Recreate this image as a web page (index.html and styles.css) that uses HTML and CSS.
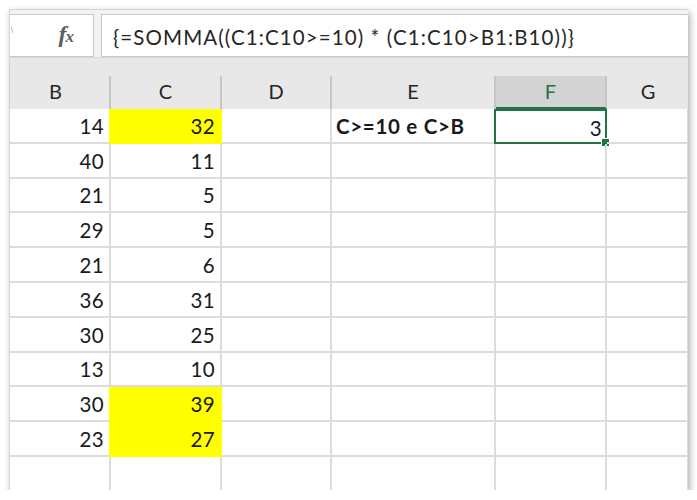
FILE: index.html
```html
<!DOCTYPE html>
<html>
<head>
<meta charset="utf-8">
<link rel="stylesheet" href="styles.css">
</head>
<body>
<div class="frame">
  <div class="fbar">
    <div class="namebox">
      <svg class="tick" width="4" height="8" viewBox="0 0 4 8"><path d="M1 1 L3 7" stroke="#c8c8c8" stroke-width="1.2" fill="none"/></svg>
      <span class="fx"><span class="f">f</span><span class="x">x</span></span>
    </div>
    <div class="formula">{=SOMMA((C1:C10&gt;=10) * (C1:C10&gt;B1:B10))}</div>
  </div>
  <div class="headzone">
    <div class="heads">
      <div class="h">B</div>
      <div class="h">C</div>
      <div class="h">D</div>
      <div class="h">E</div>
      <div class="h sel">F</div>
      <div class="h last">G</div>
    </div>
  </div>
  <div class="grid">
    <div class="c num">14</div><div class="c num y">32</div><div class="c"></div><div class="c lbl">C&gt;=10 e C&gt;B</div><div class="c num active">3<span class="handle"></span></div><div class="c"></div>
    <div class="c num">40</div><div class="c num">11</div><div class="c"></div><div class="c"></div><div class="c"></div><div class="c"></div>
    <div class="c num">21</div><div class="c num">5</div><div class="c"></div><div class="c"></div><div class="c"></div><div class="c"></div>
    <div class="c num">29</div><div class="c num">5</div><div class="c"></div><div class="c"></div><div class="c"></div><div class="c"></div>
    <div class="c num">21</div><div class="c num">6</div><div class="c"></div><div class="c"></div><div class="c"></div><div class="c"></div>
    <div class="c num">36</div><div class="c num">31</div><div class="c"></div><div class="c"></div><div class="c"></div><div class="c"></div>
    <div class="c num">30</div><div class="c num">25</div><div class="c"></div><div class="c"></div><div class="c"></div><div class="c"></div>
    <div class="c num">13</div><div class="c num">10</div><div class="c"></div><div class="c"></div><div class="c"></div><div class="c"></div>
    <div class="c num">30</div><div class="c num y">39</div><div class="c"></div><div class="c"></div><div class="c"></div><div class="c"></div>
    <div class="c num">23</div><div class="c num y">27</div><div class="c"></div><div class="c"></div><div class="c"></div><div class="c"></div>
    <div class="c"></div><div class="c"></div><div class="c"></div><div class="c"></div><div class="c"></div><div class="c"></div>
  </div>
</div>
</body>
</html>
```
FILE: styles.css
```css
html, body {
  margin: 0;
  padding: 0;
  background: #ffffff;
}
body {
  font-family: Lato, "Open Sans", sans-serif;
  color: #1a1a1a;
}
.frame {
  margin: 9px 0 0 9px;
  width: 679px;
  height: 481px;
  overflow: hidden;
  background: #ffffff;
  border-left: 1px solid #d4d4d4;
  border-top: 1px solid #d4d4d4;
  box-shadow: 2px 3px 7px rgba(0, 0, 0, 0.32);
  box-sizing: border-box;
}
.fbar {
  height: 47px;
  background: #f2f2f2;
  display: flex;
  gap: 7px;
  padding: 4px 0 0 0;
  box-sizing: border-box;
}
.namebox {
  width: 84px;
  background: #ffffff;
  border: 1px solid #c9c9c9;
  border-left: none;
  display: flex;
  align-items: center;
  justify-content: space-between;
  padding-right: 20px;
  box-sizing: border-box;
}
.tick {
  margin-top: -12px;
}
.fx {
  font-family: "Liberation Serif", serif;
  font-style: italic;
  font-weight: bold;
  color: #5f5f5f;
  font-size: 24px;
  letter-spacing: -1px;
  padding-bottom: 2px;
}
.fx .x {
  font-size: 17px;
}
.formula {
  flex: 1;
  background: #ffffff;
  border: 1px solid #c9c9c9;
  border-right: none;
  font-size: 20.5px;
  letter-spacing: 1.1px;
  color: #262626;
  display: flex;
  align-items: center;
  padding-left: 11px;
  padding-top: 2px;
}
.headzone {
  height: 52px;
  background: #e8e8e8;
  display: flex;
  align-items: flex-end;
  border-top: 1px solid #d6d6d6;
  box-sizing: border-box;
}
.heads {
  display: grid;
  grid-template-columns: 101px 111px 110px 164px 111px 82px;
  height: 33px;
  width: 100%;
}
.h {
  font-size: 20px;
  color: #262626;
  display: flex;
  align-items: center;
  justify-content: center;
  border-right: 2px solid #c6c6c6;
  padding-bottom: 3px;
  box-sizing: border-box;
}
.h:first-child {
  padding-right: 8px;
}
.h.last {
  border-right: none;
}
.h.sel {
  background: #d3d3d3;
  color: #217346;
  border-bottom: 2px solid #217346;
  padding-bottom: 1px;
}
.grid {
  display: grid;
  grid-template-columns: 101px 111px 110px 164px 111px 82px;
  grid-auto-rows: 34.8px;
}
.c {
  position: relative;
  border-right: 2px solid #dcdcdc;
  border-bottom: 2px solid #dcdcdc;
  box-sizing: border-box;
  font-size: 20.5px;
  letter-spacing: 0.4px;
  display: flex;
  align-items: flex-end;
  padding: 0 5px 4px 5px;
  color: #1a1a1a;
}
.c.num {
  justify-content: flex-end;
}
.c.y {
  background: #ffff00;
  border-right-color: #ffff00;
  border-bottom-color: #ffff00;
  margin-left: -2px;
  padding-left: 7px;
}
.c.lbl {
  font-weight: bold;
  letter-spacing: 0.7px;
  padding-left: 4px;
}
.c.active {
  border: 2px solid #217346;
  margin-left: -2px;
  padding-right: 3px;
  padding-bottom: 2px;
}
.handle {
  position: absolute;
  right: -5px;
  bottom: -5px;
  width: 7px;
  height: 7px;
  background: #217346;
  border: 1px solid #ffffff;
}
```
